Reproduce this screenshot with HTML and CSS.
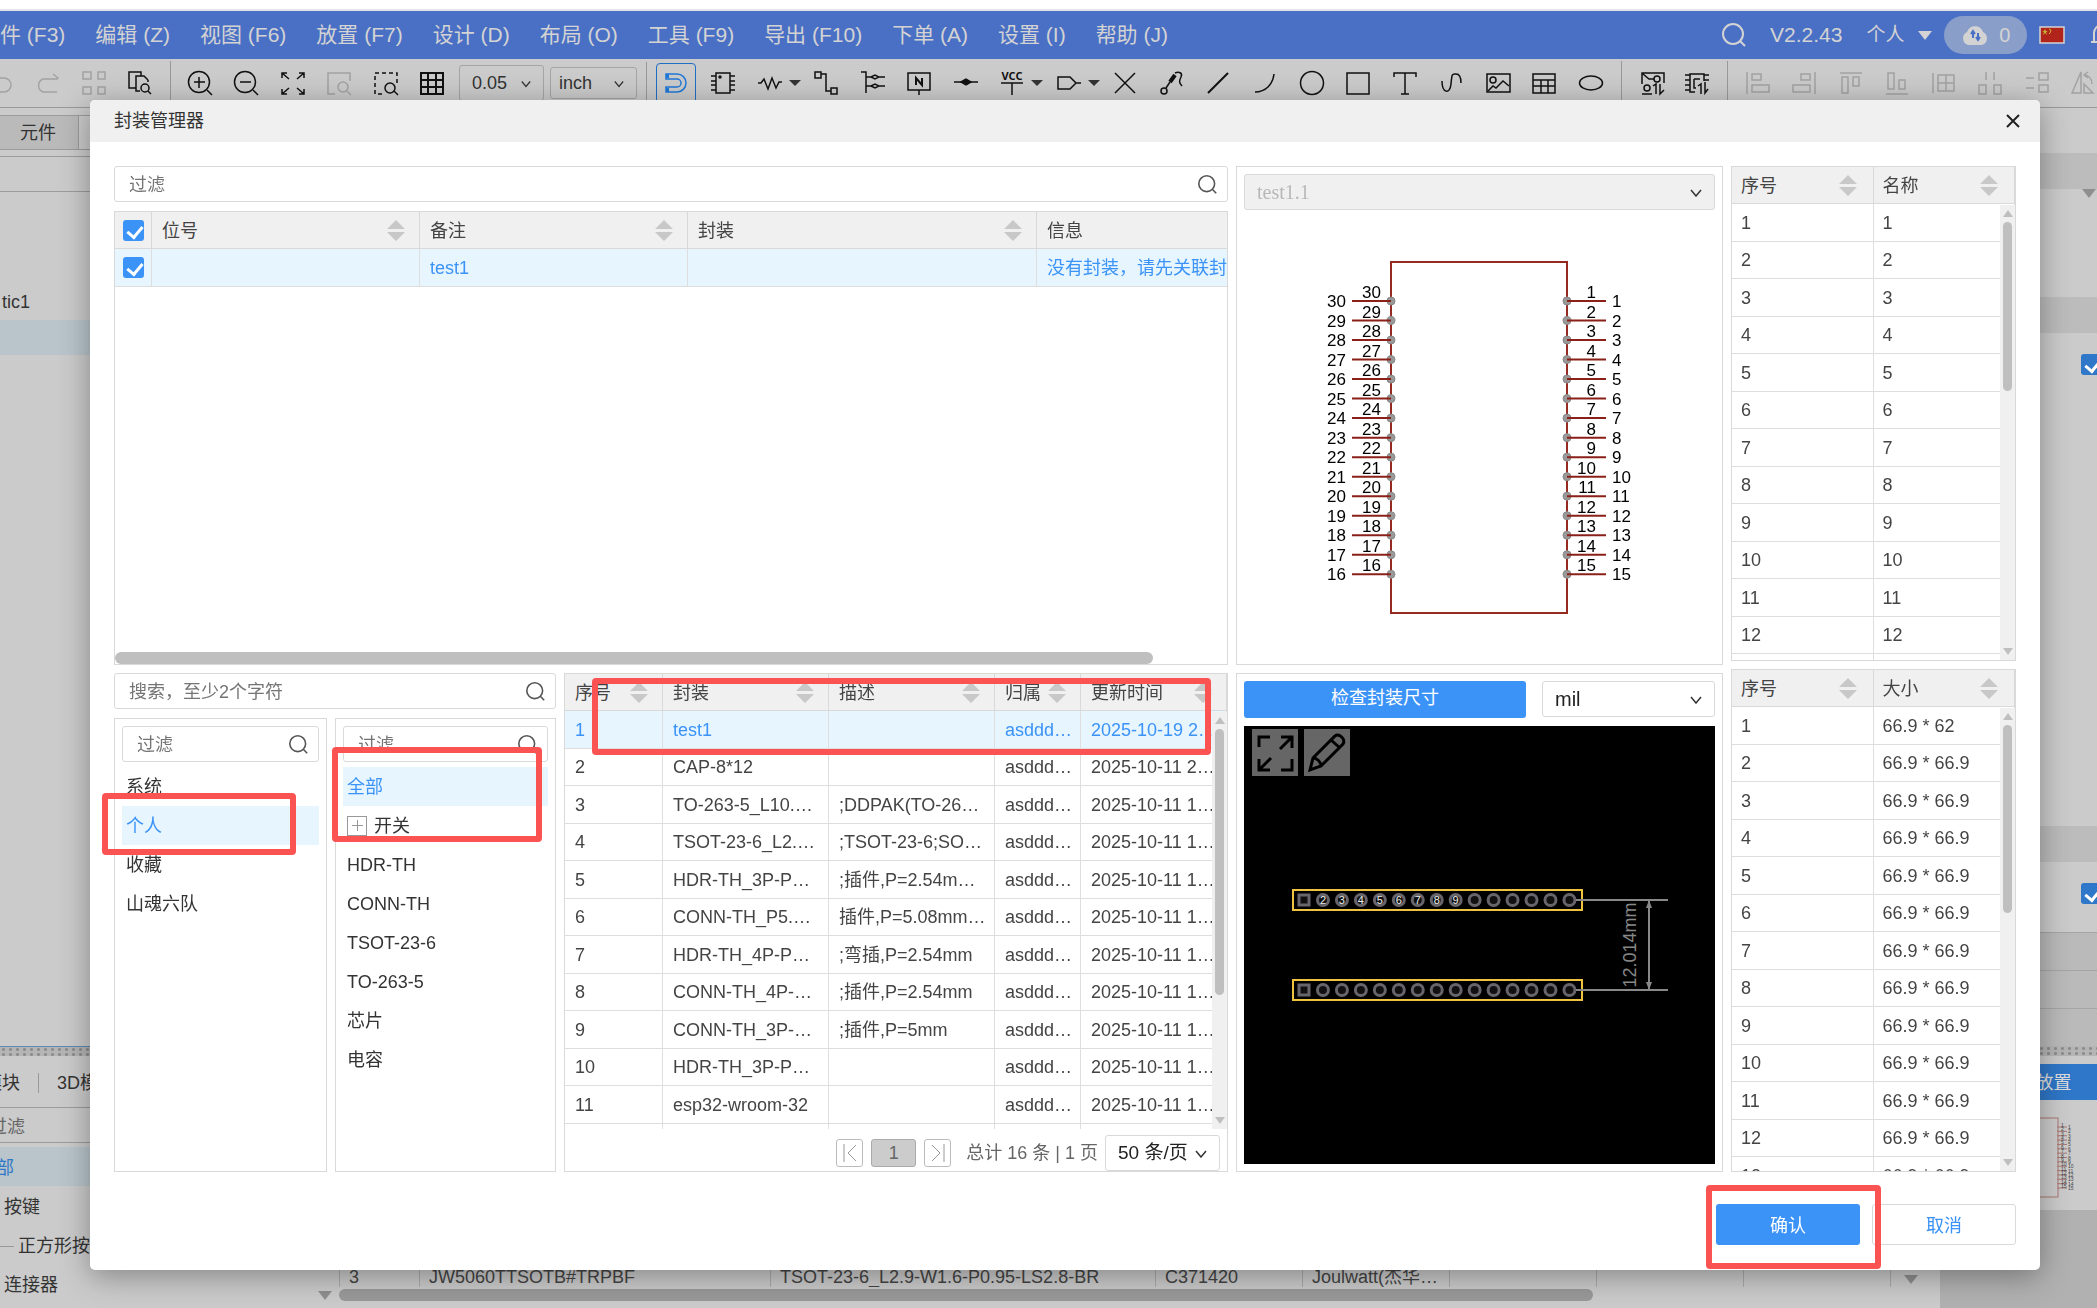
FILE: index.html
```html
<!DOCTYPE html>
<html lang="zh-CN">
<head>
    <meta charset="UTF-8">
    <title>封装管理器</title>
    <link rel="stylesheet" href="styles.css">
    <script src="script.js" defer></script>
</head>
<body>
<svg class="defs" aria-hidden="true">
    <symbol id="search" viewBox="0 0 24 24"><circle cx="11" cy="11" r="10"/><path d="M18 18l5 5"/></symbol>
    <symbol id="chevron" viewBox="0 0 12 8"><path d="M1 1l5 6 5-6"/></symbol>
    <symbol id="sort" viewBox="0 0 18 21"><path d="M9 0l9 9H0zM0 12h18l-9 9z"/></symbol>
</svg>
<div class="app">
    <div class="topstrip"></div>
    <nav class="menubar">
        <div class="menus">
            <button>件 (F3)</button>
            <button>编辑 (Z)</button>
            <button>视图 (F6)</button>
            <button>放置 (F7)</button>
            <button>设计 (D)</button>
            <button>布局 (O)</button>
            <button>工具 (F9)</button>
            <button>导出 (F10)</button>
            <button>下单 (A)</button>
            <button>设置 (I)</button>
            <button>帮助 (J)</button>
        </div>
        <div class="account">
            <svg class="icon light"><use href="#search"/></svg>
            <span class="version">V2.2.43</span>
            <button class="user">个人<span class="caret"></span></button>
            <button class="cloud">
                <svg width="28" height="22" viewBox="0 0 28 22"><path d="M7 21a7 7 0 0 1-1-13 8.500 8.500 0 0 1 16 0 7 7 0 0 1-1 13z" fill="#d3d3d3"/><path d="M12 14V8M10 10l2-3 2 3M17 9v6M15 13l2 3 2-3" fill="none" stroke="#4a70c6" stroke-width="2"/></svg>
                <span>0</span>
            </button>
            <svg class="flag" width="26" height="18" viewBox="0 0 26 18"><rect x="1" y="1" width="24" height="16" fill="#b0241c" stroke="#d3d3d3" stroke-width="1.500"/><path d="M6 3l1 2h2l-2 1 1 3-2-2-2 2 1-3-2-1h2z" fill="#c9b32e"/><path d="M10 3l2 1-1 3-1 1" fill="none" stroke="#c9b32e"/></svg>
            <svg class="icon light bell" viewBox="0 0 24 24"><path d="M1 19h22M4 19V10a8 8 0 0 1 16 0v9M12 1v2M9 22h6"/></svg>
        </div>
    </nav>
    <div class="toolbar">
        <div class="tools history">
            <svg class="icon off" viewBox="0 0 24 24"><path d="M6 4L2 7h13a7 7 0 0 1 0 14H3"/></svg>
            <svg class="icon off" viewBox="0 0 24 24"><path d="M18 3l5 4-1 1H8a7 7 0 0 0 0 13h14"/></svg>
            <svg class="icon off" viewBox="0 0 24 24"><path d="M1 1h8v7H1zM16 1h7v7h-7zM1 16h8v7H1zM16 16h7v7h-7z"/></svg>
            <svg class="icon" viewBox="0 0 24 24"><path d="M12 20H8V5h8l4 4M8 17H1V1h12v4M20 9v2"/><circle cx="17" cy="17" r="4"/><path d="M20 20l3 3"/></svg>
        </div>
        <div class="tools view">
            <svg class="icon" viewBox="0 0 24 24"><circle cx="11" cy="11" r="10.500"/><path d="M11 6v11M6 11h11M19 19l5 5"/></svg>
            <svg class="icon" viewBox="0 0 24 24"><circle cx="11" cy="11" r="10.500"/><path d="M6 11h11M19 19l5 5"/></svg>
            <svg class="icon" viewBox="0 0 24 24"><path d="M1 7V2h5M1 2l7 6M18 2h5v5M23 2l-7 6M1 18v5h5M1 23l7-6M18 23h5v-5M23 23l-7-6"/></svg>
            <svg class="icon off" viewBox="0 0 24 24"><path d="M8 23H1V2h22v8"/><circle cx="16" cy="16" r="5"/><path d="M20 20l4 4"/></svg>
            <svg class="icon" viewBox="0 0 24 24"><path stroke-dasharray="4 3" d="M8 23H1V2h22v10"/><circle cx="16" cy="17" r="5"/><path d="M20 20l4 4"/></svg>
            <svg class="icon" viewBox="0 0 24 24"><path d="M1 2h22v21H1zM1 9h22M1 16h22M8 2v21M16 2v21" stroke-width="2"/></svg>
        </div>
        <div class="pick pick-tall"><select aria-label="网格"><option>0.05</option></select><svg class="chev"><use href="#chevron"/></svg></div>
        <div class="pick"><select aria-label="单位"><option>inch</option></select><svg class="chev"><use href="#chevron"/></svg></div>
        <button class="magnet" aria-label="吸附"><svg class="icon" viewBox="0 0 24 24"><path d="M2 3h11a9 9 0 0 1 0 18H2v-5h11a4 4 0 0 0 0-8H2z"/><path d="M2 5h3M2 19h3" stroke-width="4"/></svg></button>
        <div class="tools place">
            <svg class="icon" viewBox="0 0 24 24"><path d="M5 2h14v20H5zM0 5h5M0 10h5M0 14h5M0 19h5M19 5h5M19 10h5M19 14h5M19 19h5"/><circle cx="9" cy="6" r="1"/></svg>
            <span class="drop"><svg class="icon" viewBox="0 0 24 24"><path d="M0 12h3l3-4 4 10 4-11 4 10 3-6h3"/></svg><i class="caret dark"></i></span>
            <svg class="icon" viewBox="0 0 24 24"><path d="M1 1h6v6H1zM17 17h6v6h-6zM7 3h5v17h5"/></svg>
            <svg class="icon" viewBox="0 0 24 24"><path d="M0 1h5v21M5 6h5l4-2 4 2-4 2-4-2M18 6h6M5 15h5l4-2 4 2-4 2-4-2M18 15h6"/></svg>
            <svg class="icon" viewBox="0 0 24 24"><path d="M1 2h22v17H1zM12 19v5"/><path d="M9 14V7l6 7V7" stroke-width="2"/></svg>
            <svg class="icon" viewBox="0 0 24 24"><path d="M0 11h24" /><path d="M7 11l5-3 5 3-5 3z" fill="#111"/></svg>
            <span class="drop"><svg class="icon" viewBox="0 0 24 24"><text x="12" y="9" text-anchor="middle">VCC</text><path d="M1 12h22M12 12v12"/></svg><i class="caret dark"></i></span>
            <span class="drop"><svg class="icon" viewBox="0 0 24 24"><path d="M1 6h12l6 6-6 6H1zM19 12h5"/></svg><i class="caret dark"></i></span>
            <svg class="icon" viewBox="0 0 24 24"><path d="M2 2l20 20M22 2L2 22"/></svg>
            <svg class="icon" viewBox="0 0 24 24"><circle cx="4" cy="20" r="3"/><path d="M6 17l4-6"/><path d="M10 11l5-7" stroke-width="4"/><path d="M15 2c4-2 8 0 6 4s-2 6 1 9"/></svg>
            <svg class="icon" viewBox="0 0 24 24"><path d="M2 22L22 2" stroke-width="2"/></svg>
            <svg class="icon" viewBox="0 0 24 24"><path d="M2 21c11 0 18-8 19-18"/></svg>
            <svg class="icon" viewBox="0 0 24 24"><circle cx="12" cy="12" r="11.500"/></svg>
            <svg class="icon" viewBox="0 0 24 24"><path d="M1 2h22v21H1z"/></svg>
            <svg class="icon" viewBox="0 0 24 24"><path d="M1 6V2h22v4M12 2v21M8 23h8"/></svg>
            <svg class="icon" viewBox="0 0 24 24"><path d="M3 10c0 12 8 14 9 3s1-10 5-10 5 4 5 9"/></svg>
            <svg class="icon" viewBox="0 0 24 24"><path d="M1 3h23v18H1z"/><circle cx="7" cy="9" r="3"/><path d="M2 20l5-5 3 2 7-7 6 5"/></svg>
            <svg class="icon" viewBox="0 0 24 24"><path d="M1 3h22v19H1zM1 9h22M1 15h22M9 9v13M16 9v13"/></svg>
            <svg class="icon" viewBox="0 0 24 24"><ellipse cx="12" cy="12" rx="11.500" ry="7"/></svg>
        </div>
        <div class="tools convert">
            <svg class="icon" viewBox="0 0 24 24"><path d="M1 13V2h22v10M2 3l6 5h5M1 23h10"/><circle cx="16" cy="8" r="3"/><circle cx="6" cy="17" r="3"/><path d="M12 15l3-2v10M19 13v10l4-4"/></svg>
            <svg class="icon" viewBox="0 0 24 24"><path d="M10 21H5V3h14v7M9 8h6M9 8v9h2M0 4h5M0 9h5M0 14h5M0 19h5M19 4h5M19 9h5M13 15l3-2v10M20 11v11l3-4"/></svg>
        </div>
        <div class="tools align">
            <svg class="icon off" viewBox="0 0 24 24"><path d="M1 1v22M6 3h9v6H6zM6 14h17v7H6z"/></svg>
            <svg class="icon off" viewBox="0 0 24 24"><path d="M23 1v22M9 3h9v6H9zM1 14h17v7H1z"/></svg>
            <svg class="icon off" viewBox="0 0 24 24"><path d="M1 2h22M3 6h6v16H3zM14 6h6v9h-6z"/></svg>
            <svg class="icon off" viewBox="0 0 24 24"><path d="M1 23h22M3 2h6v16H3zM14 9h6v9h-6z"/></svg>
            <svg class="icon off" viewBox="0 0 24 24"><path d="M1 2v20M6 4h16v16H6zM6 12h16M14 4v16"/></svg>
            <svg class="icon off" viewBox="0 0 24 24"><path d="M8 1v8M16 1v8M1 14h7v9H1zM16 14h7v9h-7z"/></svg>
            <svg class="icon off" viewBox="0 0 24 24"><path d="M1 7h8M1 17h8M14 2h9v7h-9zM14 14h9v7h-9z"/></svg>
            <svg class="icon off" viewBox="0 0 24 24"><path d="M1 22L10 1v21zM13 13l9 9h-9zM13 4c5 0 8 4 8 9M17 1l-4 3 4 3"/></svg>
        </div>
    </div>
    <main class="workspace">
        <aside class="left">
            <div class="lefttabs"><button>元件</button></div>
            <div class="leftfilter"></div>
            <div class="project">
                <div class="node">tic1</div>
                <div class="node chosen"></div>
            </div>
            <div class="splitter blue"></div>
            <div class="library">
                <div class="libtabs"><span>模块</span><i></i><span>3D模块</span></div>
                <div class="libfilter">过滤</div>
                <div class="libitem chosen">全部</div>
                <div class="libitem deep">按键</div>
                <div class="libitem branch">正方形按键</div>
                <div class="libitem deep">连接器</div>
            </div>
        </aside>
        <section class="parts">
            <table>
                <colgroup><col class="p1"><col class="p2"><col class="p3"><col class="p4"><col class="p4"><col class="p4"><col class="p4"><col class="p4"><col></colgroup>
                <tr><td>3</td><td>JW5060TTSOTB#TRPBF</td><td>TSOT-23-6_L2.9-W1.6-P0.95-LS2.8-BR</td><td>C371420</td><td>Joulwatt(杰华…</td><td></td><td></td><td></td><td></td></tr>
            </table>
            <div class="partsbar"></div>
            <i class="caret dim down-left"></i>
            <i class="caret dim down-right"></i>
        </section>
        <aside class="right">
            <div class="gap"></div>
            <div class="band"></div>
            <div class="prop first"><i class="caret dim"></i></div>
            <div class="band"></div>
            <div class="prop grow"><input type="checkbox" aria-label="显示" checked></div>
            <div class="band"></div>
            <div class="prop short"><input type="checkbox" aria-label="名称" checked></div>
            <div class="line"></div>
            <div class="line"></div>
            <div class="line"></div>
            <div class="splitter"></div>
            <button class="put">放置</button>
            <svg class="mini" width="157" height="110" viewBox="0 0 157 110" id="mini"></svg>
            <div class="below"></div>
        </aside>
    </main>
</div>

<div class="dialog" role="dialog" aria-label="封装管理器">
    <header class="head">
        <h1>封装管理器</h1>
        <button class="close" aria-label="关闭"><svg width="14" height="14" viewBox="0 0 14 14"><path d="M1 1l12 12M13 1L1 13" stroke="#222" stroke-width="2"/></svg></button>
    </header>
    <div class="content">
        <div class="col">
            <div class="half">
                <div class="field"><input type="text" placeholder="过滤" aria-label="过滤"><svg><use href="#search"/></svg></div>
                <div class="panel devices">
                    <table>
                        <colgroup><col class="d1"><col class="d2"><col class="d2"><col class="d3"><col></colgroup>
                        <thead>
                        <tr>
                            <th class="tick"><input type="checkbox" aria-label="全选" checked></th>
                            <th><div>位号<svg><use href="#sort"/></svg></div></th>
                            <th><div>备注<svg><use href="#sort"/></svg></div></th>
                            <th><div>封装<svg><use href="#sort"/></svg></div></th>
                            <th><div>信息</div></th>
                        </tr>
                        </thead>
                        <tbody>
                        <tr class="on"><td class="tick"><input type="checkbox" aria-label="test1" checked></td><td></td><td>test1</td><td></td><td>没有封装，请先关联封装</td></tr>
                        </tbody>
                    </table>
                    <div class="hbar"></div>
                </div>
            </div>
            <div class="half lower">
                <div class="finder">
                    <div class="field"><input type="text" placeholder="搜索，至少2个字符" aria-label="搜索"><svg><use href="#search"/></svg></div>
                    <div class="lists">
                        <div class="panel list owners">
                            <div class="field"><input type="text" placeholder="过滤" aria-label="过滤分类"><svg><use href="#search"/></svg></div>
                            <ul>
                                <li>系统</li>
                                <li class="on">个人</li>
                                <li>收藏</li>
                                <li>山魂六队</li>
                            </ul>
                            <div class="mark mark-owner"></div>
                        </div>
                        <div class="panel list kinds">
                            <div class="field"><input type="text" placeholder="过滤" aria-label="过滤类型"><svg><use href="#search"/></svg></div>
                            <ul>
                                <li class="on">全部</li>
                                <li><button class="plus" aria-label="展开"></button>开关</li>
                                <li>HDR-TH</li>
                                <li>CONN-TH</li>
                                <li>TSOT-23-6</li>
                                <li>TO-263-5</li>
                                <li>芯片</li>
                                <li>电容</li>
                            </ul>
                            <div class="mark mark-kind"></div>
                        </div>
                    </div>
                </div>
                <div class="panel footprints">
                    <div class="rows">
                        <table>
                            <colgroup><col class="f1"><col class="f2"><col class="f3"><col class="f4"><col></colgroup>
                            <thead>
                            <tr>
                                <th><div>序号<svg><use href="#sort"/></svg></div></th>
                                <th><div>封装<svg><use href="#sort"/></svg></div></th>
                                <th><div>描述<svg><use href="#sort"/></svg></div></th>
                                <th><div>归属<svg><use href="#sort"/></svg></div></th>
                                <th><div>更新时间<svg><use href="#sort"/></svg></div></th>
                            </tr>
                            </thead>
                            <tbody>
                            <tr class="on"><td>1</td><td>test1</td><td></td><td>asddd…</td><td>2025-10-19 2…</td></tr>
                            <tr><td>2</td><td>CAP-8*12</td><td></td><td>asddd…</td><td>2025-10-11 2…</td></tr>
                            <tr><td>3</td><td>TO-263-5_L10.…</td><td>;DDPAK(TO-26…</td><td>asddd…</td><td>2025-10-11 1…</td></tr>
                            <tr><td>4</td><td>TSOT-23-6_L2.…</td><td>;TSOT-23-6;SO…</td><td>asddd…</td><td>2025-10-11 1…</td></tr>
                            <tr><td>5</td><td>HDR-TH_3P-P…</td><td>;插件,P=2.54m…</td><td>asddd…</td><td>2025-10-11 1…</td></tr>
                            <tr><td>6</td><td>CONN-TH_P5.…</td><td>插件,P=5.08mm…</td><td>asddd…</td><td>2025-10-11 1…</td></tr>
                            <tr><td>7</td><td>HDR-TH_4P-P…</td><td>;弯插,P=2.54mm</td><td>asddd…</td><td>2025-10-11 1…</td></tr>
                            <tr><td>8</td><td>CONN-TH_4P-…</td><td>;插件,P=2.54mm</td><td>asddd…</td><td>2025-10-11 1…</td></tr>
                            <tr><td>9</td><td>CONN-TH_3P-…</td><td>;插件,P=5mm</td><td>asddd…</td><td>2025-10-11 1…</td></tr>
                            <tr><td>10</td><td>HDR-TH_3P-P…</td><td></td><td>asddd…</td><td>2025-10-11 1…</td></tr>
                            <tr><td>11</td><td>esp32-wroom-32</td><td></td><td>asddd…</td><td>2025-10-11 1…</td></tr>
                            <tr><td></td><td></td><td></td><td></td><td></td></tr>
                            </tbody>
                        </table>
                        <div class="vbar"><i class="up"></i><b class="long"></b><i class="down"></i></div>
                    </div>
                    <div class="pager">
                        <button aria-label="首页"><svg width="14" height="18" viewBox="0 0 14 18"><path d="M1 0v18M13 1L5 9l8 8"/></svg></button>
                        <button class="page">1</button>
                        <button aria-label="末页"><svg width="14" height="18" viewBox="0 0 14 18"><path d="M13 0v18M1 1l8 8-8 8"/></svg></button>
                        <span>总计 16 条 | 1 页</span>
                        <div class="choose"><select aria-label="每页条数"><option>50 条/页</option></select><svg class="chev"><use href="#chevron"/></svg></div>
                    </div>
                    <div class="mark mark-row"></div>
                </div>
            </div>
        </div>

        <div class="col">
            <div class="panel half symbol">
                <div class="choose off"><select aria-label="符号" disabled><option>test1.1</option></select><svg class="chev"><use href="#chevron"/></svg></div>
                <svg class="drawing" viewBox="0 0 330 360" width="330" height="360" id="schematic"></svg>
            </div>
            <div class="panel half preview">
                <div class="bar">
                    <button class="primary">检查封装尺寸</button>
                    <div class="choose"><select aria-label="单位"><option>mil</option></select><svg class="chev"><use href="#chevron"/></svg></div>
                </div>
                <div class="board">
                    <div class="boardtools">
                        <button aria-label="全屏"><svg viewBox="0 0 46 47"><path d="M7 18V8h11M29 8h11v11M40 8L28 20M7 30v11h11M7 41l12-12M40 30v11H29"/></svg></button>
                        <button aria-label="编辑"><svg viewBox="0 0 46 47"><path d="M6 41l3-12L31 7c4-3 11 3 8 8L17 37zM9 29c4 0 8 4 8 8M27 11l9 8"/></svg></button>
                    </div>
                    <svg class="pads" viewBox="0 0 400 120" width="400" height="120" id="pads"></svg>
                </div>
            </div>
        </div>

        <div class="col">
            <div class="panel pins">
                <table>
                    <thead><tr><th><div>序号<svg><use href="#sort"/></svg></div></th><th><div>名称<svg><use href="#sort"/></svg></div></th></tr></thead>
                    <tbody>
                    <tr><td>1</td><td>1</td></tr>
                    <tr><td>2</td><td>2</td></tr>
                    <tr><td>3</td><td>3</td></tr>
                    <tr><td>4</td><td>4</td></tr>
                    <tr><td>5</td><td>5</td></tr>
                    <tr><td>6</td><td>6</td></tr>
                    <tr><td>7</td><td>7</td></tr>
                    <tr><td>8</td><td>8</td></tr>
                    <tr><td>9</td><td>9</td></tr>
                    <tr><td>10</td><td>10</td></tr>
                    <tr><td>11</td><td>11</td></tr>
                    <tr><td>12</td><td>12</td></tr>
                    <tr><td></td><td></td></tr>
                    </tbody>
                </table>
                <div class="vbar"><i class="up"></i><b></b><i class="down"></i></div>
            </div>
            <div class="panel sizes">
                <table>
                    <thead><tr><th><div>序号<svg><use href="#sort"/></svg></div></th><th><div>大小<svg><use href="#sort"/></svg></div></th></tr></thead>
                    <tbody>
                    <tr><td>1</td><td>66.9 * 62</td></tr>
                    <tr><td>2</td><td>66.9 * 66.9</td></tr>
                    <tr><td>3</td><td>66.9 * 66.9</td></tr>
                    <tr><td>4</td><td>66.9 * 66.9</td></tr>
                    <tr><td>5</td><td>66.9 * 66.9</td></tr>
                    <tr><td>6</td><td>66.9 * 66.9</td></tr>
                    <tr><td>7</td><td>66.9 * 66.9</td></tr>
                    <tr><td>8</td><td>66.9 * 66.9</td></tr>
                    <tr><td>9</td><td>66.9 * 66.9</td></tr>
                    <tr><td>10</td><td>66.9 * 66.9</td></tr>
                    <tr><td>11</td><td>66.9 * 66.9</td></tr>
                    <tr><td>12</td><td>66.9 * 66.9</td></tr>
                    <tr><td>13</td><td>66.9 * 66.9</td></tr>
                    </tbody>
                </table>
                <div class="vbar"><i class="up"></i><b class="mid"></b><i class="down"></i></div>
            </div>
        </div>
    </div>
    <footer class="foot">
        <button class="primary">确认</button>
        <button class="plain">取消</button>
        <div class="mark mark-ok"></div>
    </footer>
</div>
</body>
</html>
```
FILE: styles.css
```css
* {
    box-sizing: border-box;
}

html, body {
    margin: 0;
    height: 100%;
    overflow: hidden;
}

body, button, input, select {
    font-family: "Liberation Sans", "Noto Sans CJK SC", sans-serif;
    font-size: 18px;
    line-height: 24px;
    color: #333;
}

button {
    border: 0;
    padding: 0;
    background: none;
}

h1, ul {
    margin: 0;
    padding: 0;
    font-size: 18px;
    font-weight: normal;
    list-style: none;
}

.defs {
    position: absolute;
    width: 0;
    height: 0;
}

/* application behind the dialog */
.app {
    height: 100vh;
    display: flex;
    flex-direction: column;
    background: #cbcbcb;
}

.topstrip {
    height: 11px;
    flex: none;
    background: #fff;
    border-bottom: 2px solid #e1e5e8;
}

.menubar {
    height: 48px;
    flex: none;
    display: flex;
    justify-content: space-between;
    background: #4a70c6;
}

.menus, .account {
    display: flex;
    align-items: center;
}

.menus {
    gap: 30px;
}

.menubar button, .version {
    font-size: 21px;
    color: #d3d3d3;
    white-space: nowrap;
}

.account {
    flex: none;
    width: 375px;
}

.account > * {
    flex: none;
}

.version {
    margin-left: 24px;
}

.account .user {
    margin-left: 24px;
    font-size: 19px;
    display: flex;
    align-items: center;
    gap: 14px;
}

.caret {
    width: 0;
    height: 0;
    border: 7px solid transparent;
    border-top: 9px solid #d3d3d3;
    border-bottom: 0;
}

.caret.dark {
    border-width: 6px 6px 0;
    border-top-color: #333;
}

.caret.dim {
    border-top-color: #8f8f8f;
}

.account .cloud {
    width: 83px;
    height: 38px;
    margin-left: 12px;
    border-radius: 19px;
    background: #8a9eca;
    display: flex;
    align-items: center;
    justify-content: center;
    gap: 10px;
    font-size: 20px;
}

.flag {
    margin-left: 12px;
}

.icon {
    width: 24px;
    height: 24px;
    flex: none;
    overflow: visible;
    fill: none;
    stroke: #111;
    stroke-width: 1.5;
}

.icon text {
    font: bold 11px "Noto Sans", sans-serif;
    fill: #111;
    stroke: none;
}

.icon.light {
    stroke: #d3d3d3;
    stroke-width: 2;
}

.icon.off {
    stroke: #a3a3a3;
}

.bell {
    margin-left: 25px;
}

.toolbar {
    height: 49px;
    flex: none;
    display: flex;
    align-items: center;
    background: #cbcbcb;
    border-bottom: 1px solid #999;
}

.tools {
    height: 44px;
    flex: none;
    display: flex;
    align-items: center;
    justify-content: space-between;
}

.history {
    width: 182px;
    margin-left: -11px;
    padding-right: 18px;
    border-right: 1px solid #999;
}

.view {
    width: 256px;
    margin-left: 17px;
}

.pick {
    position: relative;
    width: 87px;
    height: 32px;
    margin-left: 6px;
}

.pick-tall {
    width: 85px;
    height: 36px;
    margin-left: 15px;
}

.pick select {
    width: 100%;
    height: 100%;
    appearance: none;
    background: none;
    border: 1px solid #a5a5a5;
    border-radius: 3px;
    padding: 0 8px;
}

.pick-tall select {
    padding: 0 12px;
}

.chev {
    position: absolute;
    right: 13px;
    top: 50%;
    width: 12px;
    height: 8px;
    margin-top: -3px;
    fill: none;
    stroke: #333;
    stroke-width: 1.5;
    pointer-events: none;
}

.pick .chev {
    width: 10px;
}

.magnet {
    width: 40px;
    height: 40px;
    margin-left: 19px;
    border: 1px solid #1f6fc4;
    border-radius: 4px;
    display: flex;
    align-items: center;
    justify-content: center;
    position: relative;
}

.magnet::before {
    content: "";
    position: absolute;
    left: -11px;
    top: -2px;
    height: 44px;
    border-left: 1px solid #999;
}

.magnet .icon {
    stroke: #1f78d8;
}

.place {
    width: 911px;
    margin-left: 15px;
    padding-right: 18px;
    border-right: 1px solid #999;
}

.drop {
    display: flex;
    align-items: center;
    gap: 7px;
    margin-right: -9px;
}

.convert {
    width: 106px;
    padding: 0 18px 0 19px;
    border-right: 1px solid #999;
}

.align {
    width: 349px;
    margin-left: 18px;
}

.workspace {
    flex: 1;
    min-height: 0;
    display: flex;
}

.left {
    width: 337px;
    display: flex;
    flex-direction: column;
    padding-top: 7px;
}

.lefttabs {
    height: 35px;
    border: solid #9c9c9c;
    border-width: 1px 0;
}

.lefttabs button {
    width: 79px;
    height: 33px;
    padding-right: 2px;
    background: #bababa;
    border-right: 1px solid #9c9c9c;
}

.leftfilter {
    height: 36px;
    margin-top: 6px;
    border: solid #9c9c9c;
    border-width: 1px 0;
}

.project {
    flex: 1;
    padding-top: 93px;
}

.node {
    height: 35px;
    padding: 5px 2px;
}

.chosen {
    background: #b9c5cb;
}

.splitter {
    height: 10px;
    flex: none;
    background: #b5b5b5 radial-gradient(circle, #8c8c8c 1px, transparent 2px) 0 0 / 7px 5px;
}

.splitter.blue {
    border-top: 1px solid #5c8ab5;
}

.library {
    height: 252px;
}

.libtabs {
    height: 52px;
    display: flex;
    align-items: center;
    border-bottom: 1px solid #9c9c9c;
    white-space: nowrap;
    margin-left: -16px;
    padding-top: 2px;
}

.libtabs i {
    height: 20px;
    margin: 0 18px;
    border-left: 1px solid #999;
}

.libfilter {
    height: 35px;
    padding-top: 7px;
    margin-bottom: 4px;
    text-indent: -11px;
    color: #666;
    border-bottom: 1px solid #9c9c9c;
}

.libitem {
    height: 39px;
    padding-top: 9px;
}

.libitem.chosen {
    text-indent: -22px;
    color: #2f77c8;
}

.libitem.deep {
    padding-left: 4px;
}

.libitem.branch {
    display: flex;
    gap: 4px;
}

.libitem.branch::before {
    content: "";
    width: 14px;
    height: 12px;
    border-bottom: 1px solid #999;
}

.parts {
    flex: 1;
    min-width: 0;
    position: relative;
    display: flex;
    flex-direction: column;
    justify-content: flex-end;
    padding: 0 34px 7px 2px;
}

.parts table {
    width: 100%;
    table-layout: fixed;
    border-spacing: 0;
}

.parts td {
    height: 28px;
    padding: 0 0 0 9px;
    line-height: 20px;
    vertical-align: bottom;
    white-space: nowrap;
    overflow: hidden;
    border-left: 1px solid #aaa;
    color: #444;
}

.p1 { width: 80px; }
.p2 { width: 351px; }
.p3 { width: 385px; }
.p4 { width: 147px; }

.partsbar {
    width: 80%;
    height: 12px;
    margin-top: 2px;
    border-radius: 6px;
    background: #999;
}

.down-left, .down-right {
    position: absolute;
}

.down-left {
    left: -19px;
    bottom: 8px;
}

.down-right {
    right: 22px;
    bottom: 24px;
}

.right {
    width: 157px;
    flex: none;
    display: flex;
    flex-direction: column;
}

.gap {
    height: 45px;
}

.band {
    height: 36px;
    background: #bcbcbc;
}

.first {
    height: 108px;
    padding-left: 142px;
}

.first .caret {
    display: block;
}

.prop {
    flex: none;
    overflow: hidden;
}

.prop.grow {
    flex: 1;
}

.prop input {
    margin: 21px 0 0 141px;
    background: #2f77c8;
}

.short {
    height: 70px;
}

.line {
    height: 38px;
    background: #bababa;
    border-top: 1px solid #a5a5a5;
}

.put {
    height: 36px;
    margin-top: 8px;
    padding: 2px 0 0 70px;
    background: #2f77c8;
    color: #ddd;
}

.mini {
    fill: none;
    stroke: #a87672;
}

.mini text {
    font-size: 5px;
    fill: #444;
    stroke: none;
}

.below {
    height: 98px;
    background: #b1b1b1;
}

/* footprint manager */
.dialog {
    position: fixed;
    top: 100px;
    right: 57px;
    bottom: 38px;
    left: 90px;
    display: flex;
    flex-direction: column;
    background: #fff;
    border-radius: 5px;
    box-shadow: 0 6px 30px rgba(0, 0, 0, .35);
}

.head {
    height: 42px;
    padding: 0 20px 0 24px;
    display: flex;
    align-items: center;
    justify-content: space-between;
    background: #f0f0f0;
    border-radius: 5px 5px 0 0;
}

.close svg {
    display: block;
}

.content {
    flex: 1;
    min-height: 0;
    padding: 24px 24px 0;
    display: grid;
    grid-template-columns: minmax(0, 1fr) 487px 285px;
    grid-template-rows: minmax(0, 1fr);
    gap: 8px;
}

.col {
    min-height: 0;
    display: flex;
    flex-direction: column;
    gap: 8px;
}

.half {
    flex: 1;
    min-height: 0;
    display: flex;
    flex-direction: column;
}

.panel {
    position: relative;
    border: 1px solid #d9d9d9;
}

.field {
    position: relative;
    height: 36px;
    flex: none;
}

.field input {
    width: 100%;
    height: 36px;
    padding: 2px 14px 0;
    border: 1px solid #d9d9d9;
    border-radius: 3px;
}

.field input::placeholder {
    color: #757575;
}

.field svg {
    position: absolute;
    right: 11px;
    top: 9px;
    width: 19px;
    height: 19px;
    overflow: visible;
    fill: none;
    stroke: #555;
    stroke-width: 2;
}

input[type=checkbox] {
    appearance: none;
    display: block;
    width: 21px;
    height: 21px;
    border-radius: 3px;
    background: #3b93f7;
    position: relative;
}

.prop input[type=checkbox] {
    background: #2f77c8;
}

input[type=checkbox]::after {
    content: "";
    position: absolute;
    left: 7px;
    top: 3px;
    width: 7px;
    height: 12px;
    border: solid #fff;
    border-width: 0 3px 3px 0;
    transform: rotate(40deg);
}

.dialog table {
    width: 100%;
    table-layout: fixed;
    border-spacing: 0;
}

.dialog th {
    height: 37px;
    padding: 0;
    font-weight: normal;
    text-align: left;
    background: #f0f0f0;
    border: solid #d9d9d9;
    border-width: 0 1px 1px 0;
    color: #444;
}

th div {
    display: flex;
    align-items: center;
    justify-content: space-between;
    padding: 1px 14px 0 10px;
    white-space: nowrap;
}

th svg {
    width: 18px;
    height: 21px;
    fill: #c8c8c8;
}

.dialog td {
    height: 38px;
    padding: 0 0 0 10px;
    white-space: nowrap;
    overflow: hidden;
    border: solid #dedede;
    border-width: 0 1px 1px 0;
    color: #444;
}

.dialog tbody tr:nth-child(even) td {
    height: 37px;
}

.dialog .on td {
    background: #e6f5fe;
    color: #3b93f7;
}

.dialog .tick {
    padding: 0 0 0 8px;
}

.tick input {
    margin: 0;
}

.devices {
    flex: 1;
    margin-top: 9px;
    overflow: hidden;
}

.devices table {
    width: 107%;
}

.d1 { width: 37px; }
.d2 { width: 268px; }
.d3 { width: 349px; }

.hbar {
    position: absolute;
    left: 0;
    bottom: 0;
    width: 1038px;
    height: 12px;
    border-radius: 6px;
    background: #bfbfbf;
}

.lower {
    flex-direction: row;
    gap: 8px;
}

.finder {
    width: 442px;
    display: flex;
    flex-direction: column;
    gap: 9px;
}

.lists {
    flex: 1;
    display: flex;
    gap: 8px;
}

.list {
    padding: 7px;
}

.owners {
    width: 213px;
}

.kinds {
    flex: 1;
}

.list ul {
    margin-top: 5px;
}

.list li {
    height: 39px;
    padding: 0 4px;
    display: flex;
    align-items: center;
}

.list li.on {
    background: #e6f5fe;
    color: #3b93f7;
}

.plus {
    width: 20px;
    height: 20px;
    margin-right: 7px;
    border: 1px solid #999;
    background: linear-gradient(#999, #999) center / 11px 1px no-repeat, linear-gradient(#999, #999) center / 1px 11px no-repeat;
}

.footprints {
    flex: 1;
    min-width: 0;
    display: flex;
    flex-direction: column;
}

.rows {
    position: relative;
    flex: 1;
    overflow: hidden;
}

.f1 { width: 98px; }
.f2 { width: 166px; }
.f3 { width: 166px; }
.f4 { width: 86px; }

.vbar {
    position: absolute;
    top: 38px;
    right: 0;
    bottom: 0;
    width: 15px;
    display: flex;
    flex-direction: column;
    align-items: center;
    padding: 5px 0;
    background: #f0f0f0;
}

.vbar b {
    width: 9px;
    height: 169px;
    margin: 5px 0 auto;
    border-radius: 5px;
    background: #bfbfbf;
}

.vbar .mid {
    height: 188px;
}

.vbar .long {
    height: 266px;
}

.vbar i {
    border: 5px solid transparent;
}

.vbar .up {
    border-top: 0;
    border-bottom: 7px solid #bfbfbf;
}

.vbar .down {
    border-bottom: 0;
    border-top: 7px solid #bfbfbf;
}

.pager {
    height: 42px;
    flex: none;
    display: flex;
    align-items: center;
    justify-content: flex-end;
    padding: 6px 7px 0 0;
    color: #666;
}

.pager button {
    width: 27px;
    height: 28px;
    margin-right: 8px;
    border: 1px solid #bbb;
    border-radius: 3px;
    color: #666;
}

.pager button svg {
    display: block;
    margin: auto;
    fill: none;
    stroke: #999;
}

.pager .page {
    width: 45px;
    background: #ccc;
    border-color: #aaa;
}

.pager span {
    margin: 0 7px;
}

.choose {
    position: relative;
    height: 36px;
}

.choose select {
    width: 100%;
    height: 36px;
    padding: 0 12px;
    appearance: none;
    border: 1px solid #d9d9d9;
    border-radius: 3px;
    background: #fff;
    font-size: 20px;
    color: #222;
    opacity: 1;
}

.choose.off select {
    background: #f0f0f0;
    color: #b8b8b8;
    font-family: "Liberation Serif", serif;
}

.pager .choose {
    width: 115px;
}

.pager select {
    font-size: 19px;
}

.symbol, .preview {
    padding: 7px;
}

.drawing {
    display: block;
    margin: 48px 0 0 58px;
    font-size: 17px;
}

.drawing .body {
    fill: none;
    stroke: #942a20;
    stroke-width: 2;
}

.drawing .pin {
    stroke: #8a2018;
    stroke-width: 2;
}

.drawing circle {
    fill: #999;
    stroke: #888;
}

.bar {
    display: flex;
    justify-content: space-between;
    margin-bottom: 8px;
}

.primary {
    color: #fff;
    background: #3b93f7;
    border-radius: 3px;
}

.bar .primary {
    width: 282px;
    height: 37px;
    padding-bottom: 4px;
}

.bar .choose {
    width: 173px;
}

.board {
    flex: 1;
    background: #000;
}

.boardtools {
    display: flex;
    gap: 6px;
    padding: 3px 8px;
}

.boardtools button {
    width: 46px;
    height: 47px;
    background: #666;
}

.boardtools svg {
    display: block;
    fill: none;
    stroke: #000;
    stroke-width: 3;
}

.pads {
    display: block;
    margin: 106px 0 0 41px;
}

.pads .silk {
    fill: none;
    stroke: #efc23f;
    stroke-width: 2;
}

.pads .pad {
    fill: #111;
    stroke: #68646b;
    stroke-width: 3;
}

.pads .dim {
    stroke: #888;
    stroke-width: 2;
}

.pads text {
    font-size: 11px;
    fill: #eee;
}

.pads .length {
    font-size: 18px;
    fill: #888;
}

.pins, .sizes {
    overflow: hidden;
    min-height: 0;
}

.pins th div, .sizes th div {
    padding: 1px 16px 0 9px;
}

.pins td, .sizes td {
    padding-left: 9px;
}

.pins {
    flex: 495 0 0;
}

.sizes {
    flex: 503 0 0;
}

.foot {
    position: relative;
    flex: none;
    display: flex;
    justify-content: flex-end;
    gap: 12px;
    padding: 32px 24px 25px;
}

.foot button {
    width: 144px;
    height: 41px;
    padding-top: 2px;
}

.foot .plain {
    border: 1px solid #d9d9d9;
    border-radius: 3px;
    color: #3b93f7;
}

/* red highlight frames */
.mark {
    position: absolute;
    border: 6px solid #fb5252;
    border-radius: 4px;
    pointer-events: none;
    z-index: 2;
}

.mark-owner {
    left: -13px;
    top: 74px;
    width: 194px;
    height: 62px;
}

.mark-kind {
    left: -4px;
    top: 28px;
    width: 210px;
    height: 95px;
}

.mark-row {
    left: 27px;
    top: 4px;
    right: 16px;
    height: 77px;
}

.mark-ok {
    right: 159px;
    bottom: 1px;
    width: 175px;
    height: 84px;
}
```
FILE: script.js
```js
const NS = 'http://www.w3.org/2000/svg';

function add(parent, name, attrs, text) {
    const el = document.createElementNS(NS, name);
    for (const key in attrs) {
        el.setAttribute(key, attrs[key]);
    }
    if (text !== undefined) {
        el.textContent = text;
    }
    parent.appendChild(el);
    return el;
}

// schematic symbol, 15 pins on each side
const sch = document.getElementById('schematic');
add(sch, 'rect', {class: 'body', x: 89, y: 4, width: 176, height: 351});
for (let i = 0; i < 15; i++) {
    const y = 43 + i * 19.52;
    add(sch, 'circle', {cx: 89, cy: y, r: 4});
    add(sch, 'circle', {cx: 265, cy: y, r: 4});
    add(sch, 'line', {class: 'pin', x1: 50, y1: y, x2: 89, y2: y});
    add(sch, 'line', {class: 'pin', x1: 265, y1: y, x2: 304, y2: y});
    add(sch, 'text', {x: 44, y: y + 6, 'text-anchor': 'end'}, 30 - i);
    add(sch, 'text', {x: 79, y: y - 3, 'text-anchor': 'end'}, 30 - i);
    add(sch, 'text', {x: 294, y: y - 3, 'text-anchor': 'end'}, i + 1);
    add(sch, 'text', {x: 310, y: y + 6}, i + 1);
}

// footprint, two rows of pads
const pads = document.getElementById('pads');
[15, 105].forEach((y, row) => {
    add(pads, 'rect', {class: 'silk', x: 8, y: y - 10, width: 289, height: 20});
    for (let i = 0; i < 15; i++) {
        const x = 19 + i * 18.96;
        if (i === 0) {
            add(pads, 'rect', {class: 'pad', x: x - 5, y: y - 5, width: 10, height: 10});
        } else {
            add(pads, 'circle', {class: 'pad', cx: x, cy: y, r: 5.5});
        }
        if (row === 0 && i > 0 && i < 9) {
            add(pads, 'text', {x: x, y: y + 4, 'text-anchor': 'middle'}, i + 1);
        }
    }
    add(pads, 'line', {class: 'dim', x1: 291, y1: y, x2: 383, y2: y});
});
add(pads, 'line', {class: 'dim', x1: 364, y1: 15, x2: 364, y2: 105});
add(pads, 'path', {d: 'M364 15l-3 8h6zM364 105l-3-8h6z', fill: '#888'});
add(pads, 'text', {class: 'length', x: 0, y: 0, 'text-anchor': 'middle', transform: 'translate(351 60) rotate(-90)'}, '12.014mm');

// thumbnail of the symbol in the right panel
const mini = document.getElementById('mini');
add(mini, 'rect', {x: 60, y: 18, width: 58, height: 79});
for (let i = 0; i < 15; i++) {
    const y = 27 + i * 4.36;
    add(mini, 'line', {x1: 117, y1: y, x2: 127, y2: y});
    add(mini, 'text', {x: 121, y: y}, i + 1);
    add(mini, 'text', {x: 128, y: y + 2}, i + 1);
}
```
